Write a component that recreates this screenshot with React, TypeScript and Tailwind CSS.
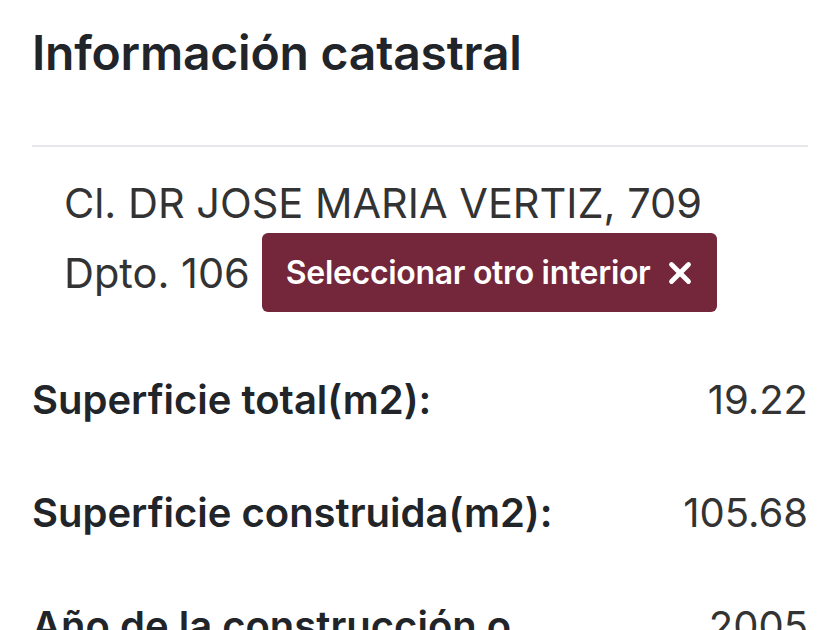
import React from 'react';
import { X } from 'lucide-react';

const rows = [
  { label: 'Superficie total(m2):', value: '19.22' },
  { label: 'Superficie construida(m2):', value: '105.68' },
  { label: 'Año de la construcción o', value: '2005' },
];

const App: React.FC = () => {
  return (
    <div className="min-h-screen bg-white px-8 font-['Inter',sans-serif] text-[#212529] overflow-hidden">
      <h1 className="pt-6 text-[48px] leading-[58px] font-semibold tracking-[-0.004em]">
        Información catastral
      </h1>

      <div className="mt-[63px] border-t-2 border-[#e5e7eb]" />

      {/* Address */}
      <div className="pl-8 pt-[26px] text-[41.5px] text-[#333]">
        <div className="leading-[60px]">Cl. DR JOSE MARIA VERTIZ, 709</div>
        <div className="flex items-center gap-3 h-[79px]">
          <span className="leading-[60px]">Dpto. 106</span>
          <button className="flex items-center gap-3 h-[79px] pl-6 pr-5 rounded-md bg-[#74263a] text-white text-[32px] font-semibold tracking-[-0.01em]">
            Seleccionar otro interior
            <X className="w-[34px] h-[34px]" strokeWidth={3.4} />
          </button>
        </div>
      </div>

      <div className="mt-[58px] flex flex-col gap-[53px]">
        {rows.map((r) => (
          <div key={r.label} className="flex justify-between text-[40px] leading-[60px]">
            <span className="font-semibold">{r.label}</span>
            <span className="text-[#333]">{r.value}</span>
          </div>
        ))}
      </div>
    </div>
  );
};

export default App;
